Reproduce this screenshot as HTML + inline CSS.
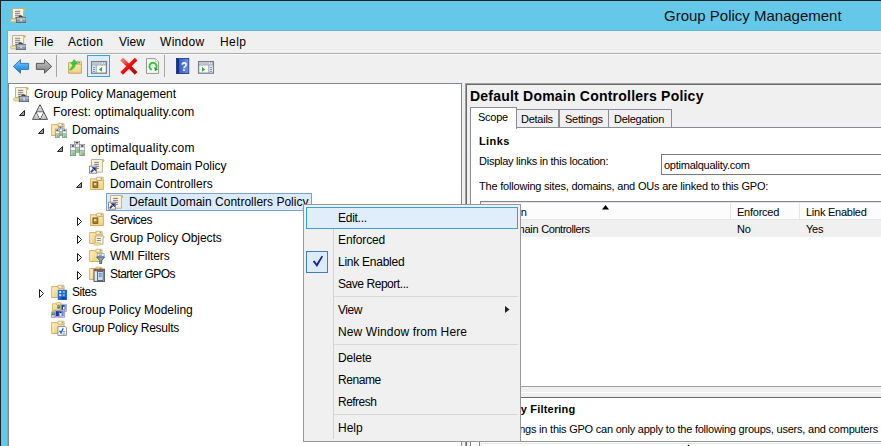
<!DOCTYPE html>
<html><head><meta charset="utf-8">
<style>
*{margin:0;padding:0;box-sizing:border-box}
html,body{width:881px;height:446px;overflow:hidden;background:#66c8e9}
body{position:relative;font-family:"Liberation Sans",sans-serif;color:#000}
.a{position:absolute}
.t{position:absolute;white-space:pre;font-size:12px;line-height:14px}
.s{position:absolute;white-space:pre;font-size:11px;line-height:13px;letter-spacing:-0.25px}
svg.i{position:absolute;width:16px;height:16px;overflow:visible}
</style></head><body>
<svg width="0" height="0" style="position:absolute">
<defs>
<linearGradient id="gBlue" x1="0" y1="0" x2="0" y2="1"><stop offset="0" stop-color="#7fd0fb"/><stop offset="1" stop-color="#0a78d8"/></linearGradient>
<linearGradient id="gGray" x1="0" y1="0" x2="0" y2="1"><stop offset="0" stop-color="#c8c8c8"/><stop offset="1" stop-color="#7c7c7c"/></linearGradient>
<linearGradient id="gFold" x1="0" y1="0" x2="0" y2="1"><stop offset="0" stop-color="#fbe9b0"/><stop offset="1" stop-color="#f0d283"/></linearGradient>
<linearGradient id="gTri" x1="0" y1="0" x2="0" y2="1"><stop offset="0" stop-color="#f2f2f2"/><stop offset="1" stop-color="#bdbdbd"/></linearGradient>
<linearGradient id="gBook" x1="0" y1="0" x2="1" y2="0"><stop offset="0" stop-color="#1d3a9a"/><stop offset="1" stop-color="#5a86e0"/></linearGradient>

<symbol id="gpm" viewBox="0 0 16 16">
 <path d="M2.5 1.5 H13.8 Q15.6 1.6 14.9 3.2 L13.6 4.2 V11.5 H2.5Z" fill="#fbf4d4" stroke="#b9b39e" stroke-width="1"/>
 <circle cx="14.2" cy="2.4" r="1.3" fill="#d6b65c"/>
 <rect x="5" y="3.8" width="5.2" height="1" fill="#7c7aa6"/>
 <rect x="5" y="5.8" width="5.2" height="1" fill="#7c7aa6"/>
 <rect x="5" y="7.8" width="5.2" height="1" fill="#7c7aa6"/>
 <rect x="5" y="9.8" width="3" height="1" fill="#7c7aa6"/>
 <rect x="0.5" y="11.9" width="7" height="3" rx="1.5" fill="#f3e2a0" stroke="#c9b06a" stroke-width="0.8"/>
 <path d="M8.4 10.6 Q10.6 7.4 12.8 10.6" fill="none" stroke="#2e2e2e" stroke-width="1.3"/>
 <rect x="6.3" y="10.3" width="9.7" height="5.3" fill="#8d9ba8" stroke="#56626e" stroke-width="0.8"/>
 <rect x="6.8" y="10.8" width="8.8" height="2" fill="#aebcc7"/>
 <rect x="10.5" y="12.2" width="1.2" height="2" fill="#f4f4f4"/>
</symbol>

<symbol id="forest" viewBox="0 0 16 16">
 <path d="M8 0.6 L11.8 8 H4.2Z" fill="url(#gTri)" stroke="#555" stroke-width="1" stroke-linejoin="round"/>
 <path d="M4.2 8 L8 15.4 H0.5Z" fill="url(#gTri)" stroke="#555" stroke-width="1" stroke-linejoin="round"/>
 <path d="M11.8 8 L15.5 15.4 H8Z" fill="url(#gTri)" stroke="#555" stroke-width="1" stroke-linejoin="round"/>
 <path d="M4.9 8.6 H11.1 L8 14.6Z" fill="#fff"/>
</symbol>

<symbol id="server" viewBox="0 0 6 12">
 <rect x="0.4" y="0.4" width="5.2" height="11.2" fill="#bfc6cd" stroke="#808890" stroke-width="0.8"/>
 <rect x="0.8" y="0.8" width="4.4" height="2.4" fill="#e9edf0"/>
 <ellipse cx="3" cy="2" rx="1.6" ry="0.75" fill="#1d2a30"/>
 <rect x="0.8" y="4" width="4.4" height="1.9" fill="#f8fafb"/>
 <rect x="0.8" y="6.4" width="4.4" height="0.7" fill="#98a1a8"/>
 <rect x="2.5" y="8.7" width="2.3" height="2.1" fill="#4ee02a"/>
</symbol>

<symbol id="domain" viewBox="0 0 16 16">
 <use href="#server" x="4" y="0.8" width="6" height="12"/>
 <use href="#server" x="0" y="4" width="6" height="12"/>
 <use href="#server" x="9.2" y="4" width="6" height="12"/>
</symbol>

<symbol id="folderA" viewBox="0 0 16 16">
 <path d="M0.7 2.6 H6.2 L7.4 3.6 H13 V13.5 H0.7Z" fill="url(#gFold)" stroke="#cfa85a" stroke-width="0.9"/>
 <rect x="6.7" y="1.2" width="6.4" height="3.2" rx="1" fill="#f7df9c" stroke="#cfa85a" stroke-width="0.8"/>
 <rect x="8.2" y="2.1" width="3.6" height="1.1" fill="#fff"/>
 <rect x="10.6" y="2.1" width="1.3" height="1.1" fill="#3d8ee0"/>
 <rect x="1.4" y="3.5" width="1.3" height="9.5" fill="#fff3c8" opacity="0.7"/>
</symbol>

<symbol id="domains" viewBox="0 0 16 16">
 <use href="#folderA" x="0" y="0" width="16" height="16"/>
 <use href="#server" x="7" y="4.2" width="5" height="10"/>
 <use href="#server" x="3.9" y="6.6" width="5" height="9.4"/>
 <use href="#server" x="11" y="6.6" width="5" height="9.4"/>
</symbol>

<symbol id="scroll" viewBox="0 0 16 16">
 <path d="M2.5 1.5 H13.6 Q15.2 1.7 14.6 3.2 L13.4 4 V14.2 H2.5Z" fill="#fbf4d4" stroke="#b9b39e" stroke-width="1"/>
 <circle cx="14" cy="2.5" r="1.2" fill="#d6b65c"/>
 <rect x="5.2" y="3.9" width="4.7" height="1" fill="#7c7aa6"/>
 <rect x="5.2" y="5.9" width="4.7" height="1" fill="#7c7aa6"/>
 <rect x="5.2" y="7.9" width="4.7" height="1" fill="#7c7aa6"/>
 <rect x="5.2" y="9.9" width="4.7" height="1" fill="#7c7aa6"/>
</symbol>

<symbol id="gpolink" viewBox="0 0 16 16">
 <use href="#scroll" x="0" y="0" width="16" height="16"/>
 <rect x="0.5" y="8.2" width="7" height="7" fill="#fff" stroke="#8e8e8e" stroke-width="1"/>
 <path d="M1.9 14.1 L4.4 11.6" stroke="#26268f" stroke-width="1.7"/><path d="M2.4 9.2 H6.8 V13.6Z" fill="#26268f"/>
</symbol>

<symbol id="ou" viewBox="0 0 16 16">
 <path d="M1.4 2.8 H6.6 L7.8 4.3 H14.4 V13.5 H1.4Z" fill="url(#gFold)" stroke="#cfa85a" stroke-width="0.9"/>
 <rect x="7.4" y="1.2" width="7" height="3.3" rx="1" fill="#f7df9c" stroke="#cfa85a" stroke-width="0.8"/>
 <rect x="8.9" y="2.1" width="3.8" height="1.1" fill="#fff"/>
 <rect x="11.6" y="2.1" width="1.3" height="1.1" fill="#3d8ee0"/>
 <rect x="3.9" y="5.9" width="5" height="5.7" fill="#a0801e" stroke="#6e5208" stroke-width="0.7"/>
 <rect x="5" y="7" width="2.4" height="2.2" fill="#e9d795"/>
</symbol>

<symbol id="gpofolder" viewBox="0 0 16 16">
 <use href="#folderA" x="0" y="0" width="16" height="16"/>
 <path d="M6.2 6 H14.2 Q15.6 6.3 15 7.4 L14 8 V14.2 H6.2Z" fill="#fbf4d4" stroke="#a9a38e" stroke-width="0.9"/>
 <rect x="7.8" y="8" width="4" height="0.9" fill="#7c7aa6"/>
 <rect x="7.8" y="10" width="4" height="0.9" fill="#7c7aa6"/>
 <rect x="4.8" y="12.8" width="7" height="2.3" rx="1.1" fill="#f3e2a0" stroke="#c9b06a" stroke-width="0.7"/>
</symbol>

<symbol id="wmi" viewBox="0 0 16 16">
 <use href="#folderA" x="0" y="0" width="16" height="16"/>
 <rect x="8.3" y="5.5" width="6.8" height="3.2" fill="#f4f6f8" stroke="#9aa4ae" stroke-width="0.8"/>
 <rect x="9.8" y="6.7" width="3.2" height="0.9" fill="#5a6a8a"/>
 <path d="M7.6 9 H15.6 L12.6 12.5 V16 H10.8 V12.5Z" fill="#8ea6c2" stroke="#44586e" stroke-width="0.9"/>
</symbol>

<symbol id="starter" viewBox="0 0 16 16">
 <use href="#folderA" x="0" y="0" width="16" height="16"/>
 <rect x="5" y="3.2" width="10.6" height="12.2" fill="#dfe6ee" stroke="#4e5660" stroke-width="1"/>
 <rect x="5" y="3" width="10.6" height="2.2" fill="#8a5c46"/>
 <rect x="8.4" y="5.6" width="5.8" height="8.8" fill="#c9dcf2" stroke="#3f4f66" stroke-width="0.8"/>
 <rect x="9.8" y="7.4" width="3" height="0.9" fill="#2a5aa0"/>
 <rect x="9.8" y="9.6" width="3" height="0.9" fill="#2a5aa0"/>
</symbol>

<symbol id="sites" viewBox="0 0 16 16">
 <use href="#folderA" x="0" y="0" width="16" height="16"/>
 <rect x="6.8" y="5.8" width="9.2" height="10.2" fill="#1a6ad8"/>
 <rect x="8.2" y="7" width="2" height="2" fill="#d8ecff"/>
 <rect x="11.8" y="7" width="2" height="2" fill="#7fb8f0"/>
 <rect x="8.2" y="10.2" width="2" height="2" fill="#d8ecff"/>
 <rect x="11.8" y="10.2" width="2" height="2" fill="#7fb8f0"/>
 <rect x="10.6" y="13.2" width="4" height="2" fill="#0a3aa0"/>
</symbol>

<symbol id="modeling" viewBox="0 0 16 16">
 <linearGradient id="gScr" x1="0" y1="0" x2="1" y2="0"><stop offset="0" stop-color="#0818a8"/><stop offset="1" stop-color="#78a6ea"/></linearGradient>
 <path d="M1.4 1.8 H5.2 L6.2 2.8 H10.1 V8.5 H1.4Z" fill="url(#gFold)" stroke="#cfa85a" stroke-width="0.8"/>
 <rect x="5.4" y="0.5" width="4.6" height="2.4" rx="0.9" fill="#f7df9c" stroke="#cfa85a" stroke-width="0.7"/>
 <rect x="9.8" y="2.2" width="5.8" height="7.2" fill="#e6eaef" stroke="#8a9098" stroke-width="0.7"/>
 <rect x="10.5" y="3" width="4.4" height="4.8" fill="url(#gScr)"/>
 <rect x="12" y="4.4" width="1.4" height="3" fill="#fff"/>
 <circle cx="12.7" cy="4.2" r="0.6" fill="#222"/>
 <rect x="6.5" y="3.5" width="2.1" height="3" fill="#2a3a2a"/>
 <rect x="6.8" y="3.9" width="1.5" height="1.6" fill="#3ae03a"/>
 <rect x="4.3" y="8.3" width="9.4" height="6.8" fill="#e6eaef" stroke="#8a9098" stroke-width="0.8"/>
 <rect x="5.1" y="9.1" width="7.8" height="5.2" fill="url(#gScr)"/>
 <rect x="8.5" y="10.6" width="2" height="3.4" fill="#fff"/>
 <circle cx="9.7" cy="10.4" r="0.75" fill="#1a1a1a"/>
 <rect x="7" y="15.1" width="4.4" height="0.9" fill="#aab0b8"/>
 <rect x="0.4" y="9.6" width="3.6" height="6.2" rx="0.8" fill="#c8ccd2" stroke="#80868e" stroke-width="0.7"/>
 <rect x="0.9" y="10.7" width="2.6" height="2.2" fill="#303830"/>
 <rect x="1.2" y="11" width="2" height="1.5" fill="#3ae03a"/>
</symbol>

<symbol id="results" viewBox="0 0 16 16">
 <use href="#folderA" x="0" y="0" width="16" height="16"/>
 <path d="M6.9 6.6 H14.4 L15.6 7.8 V15.4 H6.9Z" fill="#fafcff" stroke="#80868c" stroke-width="0.9"/>
 <path d="M8.6 10.6 L10 13 L12.2 8.2" fill="none" stroke="#1a6ad0" stroke-width="1.4"/>
 <rect x="11.6" y="11.4" width="2.6" height="0.8" fill="#5a6a9a"/>
 <rect x="11.6" y="13.6" width="2.6" height="0.8" fill="#5a6a9a"/>
</symbol>
</defs>
</svg>

<!-- outer dark border -->
<div class="a" style="left:0;top:0;width:881px;height:1px;background:#232323"></div>
<div class="a" style="left:0;top:0;width:1px;height:446px;background:#232323"></div>
<!-- title -->
<div class="t" style="left:664px;top:7px;font-size:15px;line-height:17px;color:#111;letter-spacing:0px">Group Policy Management</div>

<!-- client area -->
<div class="a" style="left:7px;top:30px;width:874px;height:416px;background:#5bb8d8"></div>
<div class="a" style="left:8px;top:31px;width:873px;height:415px;background:#f0f0f0"></div>
<div class="a" style="left:8px;top:53px;width:873px;height:1px;background:#ababab"></div>
<div class="a" style="left:8px;top:54px;width:873px;height:1px;background:#fafcfe"></div>

<!-- menubar -->
<div class="t" style="left:34px;top:35px">File</div>
<div class="t" style="left:68px;top:35px;letter-spacing:0.33px">Action</div>
<div class="t" style="left:119px;top:35px">View</div>
<div class="t" style="left:160px;top:35px;letter-spacing:0.3px">Window</div>
<div class="t" style="left:220px;top:35px;letter-spacing:0.4px">Help</div>

<!-- toolbar separators -->
<div class="a" style="left:56px;top:55px;width:1px;height:22px;background:#a6a6a6"></div>
<div class="a" style="left:164px;top:55px;width:1px;height:22px;background:#a6a6a6"></div>
<!-- toggled button -->
<div class="a" style="left:87px;top:55px;width:23px;height:22px;border:1px solid #3c9fe0;background:#dcecfc"></div>


<svg class="a" style="left:0;top:0" width="881" height="90">
 <defs>
  <linearGradient id="gRed" x1="0" y1="0" x2="1" y2="1"><stop offset="0" stop-color="#ff6a6a"/><stop offset="0.45" stop-color="#f01010"/><stop offset="1" stop-color="#c00000"/></linearGradient>
  <linearGradient id="gBook2" x1="0" y1="0" x2="1" y2="0"><stop offset="0" stop-color="#2a4fb8"/><stop offset="1" stop-color="#6d93e6"/></linearGradient>
 </defs>
 <use href="#gpm" x="10" y="7" width="16" height="16"/>
 <use href="#gpm" x="10" y="34" width="16" height="16"/>
 <path d="M13.3 66.5 L20.5 59.6 V63.4 H28.6 V69.4 H20.5 V73.2Z" fill="url(#gBlue)" stroke="#2a76c0" stroke-width="0.9" stroke-linejoin="round"/>
 <path d="M51.7 66.5 L44.5 59.6 V63.4 H36.4 V69.4 H44.5 V73.2Z" fill="url(#gGray)" stroke="#4e4e4e" stroke-width="0.9" stroke-linejoin="round"/>
 <path d="M68.6 62.6 H73.5 L74.5 63.8 H81.4 V73.2 H68.6Z" fill="url(#gFold)" stroke="#c49c52" stroke-width="0.9"/>
 <rect x="75.8" y="61.4" width="5.8" height="2.6" rx="0.8" fill="#f7df9c" stroke="#c49c52" stroke-width="0.7"/>
 <rect x="77.6" y="62.1" width="2.4" height="1" fill="#3d8ee0"/>
 <path d="M72.6 63.4 C72.8 66.4 71.4 68 69.6 69.4 L70.8 70.2 C73.6 68.6 75.4 66.6 75.4 63.4 Z" fill="#3ed23e" stroke="#22a022" stroke-width="0.5"/>
 <path d="M70.9 64 L74.2 59.6 L77.5 63.6 Z" fill="#3ed23e" stroke="#22a022" stroke-width="0.5" stroke-linejoin="round"/>

 <rect x="91.6" y="61.6" width="14.8" height="11.6" fill="#fff" stroke="#77808c" stroke-width="1.3"/>
 <rect x="92.5" y="62.6" width="9.5" height="1" fill="#9aa1ab"/>
 <rect x="102.8" y="62.4" width="1.3" height="1.3" fill="#9aa1ab"/>
 <rect x="104.6" y="62.4" width="1.3" height="1.3" fill="#9aa1ab"/>
 <rect x="92" y="64.4" width="14" height="1" fill="#8a919c"/>
 <rect x="95.6" y="65.2" width="1" height="7.7" fill="#8a919c"/>
 <rect x="93.1" y="66.8" width="1.8" height="1" fill="#3a78c8"/>
 <rect x="93.1" y="68.8" width="1.8" height="1" fill="#3a78c8"/>
 <rect x="93.1" y="70.8" width="1.8" height="1" fill="#3a78c8"/>
 <path d="M98.8 69.4 L102 67 V71.8Z" fill="#2ab82a"/>
 <path d="M123 60.4 L134.8 72 M134.8 60.4 L123 72" stroke="url(#gRed)" stroke-width="3.8" stroke-linecap="square"/>
 <path d="M146.5 58.7 H155.6 L158.6 61.7 V73.4 H146.5Z" fill="#fbfbfb" stroke="#8a8a8a" stroke-width="0.9"/>
 <path d="M155.6 58.7 V61.7 H158.6" fill="#fff" stroke="#b0b0b0" stroke-width="0.6"/>
 <path d="M151.8 69.8 A3.6 3.6 0 1 1 156.1 68.2" fill="none" stroke="#34c834" stroke-width="2"/>
 <path d="M154.2 67.1 L158.2 69.3 L155 71.2Z" fill="#12a812"/>
 <rect x="176.4" y="58.4" width="12.4" height="15.2" fill="url(#gBook2)" stroke="#1c3288" stroke-width="0.8"/>
 <rect x="176.6" y="58.6" width="2.4" height="14.8" fill="#18307e"/>
 <text x="184" y="70.8" font-family="Liberation Sans" font-weight="bold" font-size="12" fill="#fff" text-anchor="middle" transform="translate(184 0) scale(0.85 1) translate(-184 0)">?</text>

 <rect x="198.6" y="61.6" width="14.8" height="11.6" fill="#fff" stroke="#77808c" stroke-width="1.3"/>
 <rect x="199.5" y="62.6" width="9.5" height="1" fill="#9aa1ab"/>
 <rect x="209.8" y="62.4" width="1.3" height="1.3" fill="#9aa1ab"/>
 <rect x="211.6" y="62.4" width="1.3" height="1.3" fill="#9aa1ab"/>
 <rect x="199" y="64.4" width="14" height="1" fill="#8a919c"/>
 <rect x="208.4" y="65.2" width="1" height="7.7" fill="#8a919c"/>
 <rect x="210.1" y="66.8" width="1.8" height="1" fill="#3a78c8"/>
 <rect x="210.1" y="68.8" width="1.8" height="1" fill="#3a78c8"/>
 <rect x="210.1" y="70.8" width="1.8" height="1" fill="#3a78c8"/>
 <path d="M202 67 L205.2 69.4 L202 71.8Z" fill="#2ab82a"/>
</svg>

<!-- tree pane -->
<div class="a" style="left:8px;top:83px;width:454px;height:363px;border:1px solid #828790;border-bottom:none;background:#fff"></div>
<!-- selection -->
<div class="a" style="left:106px;top:193px;width:206px;height:18px;border:1px solid #7da2ce;background:#dcebfc"></div>

<div class="t" style="left:34px;top:87px">Group Policy Management</div>
<div class="t" style="left:53px;top:105px;letter-spacing:0.08px">Forest: optimalquality.com</div>
<div class="t" style="left:72px;top:123px">Domains</div>
<div class="t" style="left:91px;top:141px;letter-spacing:0.3px">optimalquality.com</div>
<div class="t" style="left:110px;top:159px;letter-spacing:-0.08px">Default Domain Policy</div>
<div class="t" style="left:110px;top:177px">Domain Controllers</div>
<div class="t" style="left:129px;top:195px">Default Domain Controllers Policy</div>
<div class="t" style="left:110px;top:213px;letter-spacing:-0.5px">Services</div>
<div class="t" style="left:110px;top:231px;letter-spacing:-0.05px">Group Policy Objects</div>
<div class="t" style="left:110px;top:249px;letter-spacing:-0.1px">WMI Filters</div>
<div class="t" style="left:110px;top:267px;letter-spacing:-0.6px">Starter GPOs</div>
<div class="t" style="left:72px;top:285px;letter-spacing:-0.5px">Sites</div>
<div class="t" style="left:72px;top:303px">Group Policy Modeling</div>
<div class="t" style="left:72px;top:321px;letter-spacing:-0.25px">Group Policy Results</div>

<svg class="i" style="left:13px;top:86px" viewBox="0 0 16 16"><use href="#gpm"/></svg>
<svg class="i" style="left:32px;top:104px" viewBox="0 0 16 16"><use href="#forest"/></svg>
<svg class="i" style="left:51px;top:122px" viewBox="0 0 16 16"><use href="#domains"/></svg>
<svg class="i" style="left:70px;top:140px" viewBox="0 0 16 16"><use href="#domain"/></svg>
<svg class="i" style="left:89px;top:158px" viewBox="0 0 16 16"><use href="#gpolink"/></svg>
<svg class="i" style="left:89px;top:176px" viewBox="0 0 16 16"><use href="#ou"/></svg>
<svg class="i" style="left:108px;top:194px" viewBox="0 0 16 16"><use href="#gpolink"/></svg>
<svg class="i" style="left:89px;top:212px" viewBox="0 0 16 16"><use href="#ou"/></svg>
<svg class="i" style="left:89px;top:230px" viewBox="0 0 16 16"><use href="#gpofolder"/></svg>
<svg class="i" style="left:89px;top:248px" viewBox="0 0 16 16"><use href="#wmi"/></svg>
<svg class="i" style="left:89px;top:266px" viewBox="0 0 16 16"><use href="#starter"/></svg>
<svg class="i" style="left:51px;top:284px" viewBox="0 0 16 16"><use href="#sites"/></svg>
<svg class="i" style="left:51px;top:302px" viewBox="0 0 16 16"><use href="#modeling"/></svg>
<svg class="i" style="left:51px;top:320px" viewBox="0 0 16 16"><use href="#results"/></svg>
<svg class="a" style="left:19px;top:110px" width="7" height="7"><path d="M5.5 0.5 V5.5 H0.5Z" fill="#9a9a9a" stroke="#262626" stroke-width="1" stroke-linejoin="miter"/></svg>
<svg class="a" style="left:38px;top:128px" width="7" height="7"><path d="M5.5 0.5 V5.5 H0.5Z" fill="#9a9a9a" stroke="#262626" stroke-width="1" stroke-linejoin="miter"/></svg>
<svg class="a" style="left:57px;top:146px" width="7" height="7"><path d="M5.5 0.5 V5.5 H0.5Z" fill="#9a9a9a" stroke="#262626" stroke-width="1" stroke-linejoin="miter"/></svg>
<svg class="a" style="left:76px;top:182px" width="7" height="7"><path d="M5.5 0.5 V5.5 H0.5Z" fill="#9a9a9a" stroke="#262626" stroke-width="1" stroke-linejoin="miter"/></svg>
<svg class="a" style="left:77px;top:217px" width="7" height="10"><path d="M0.5 0.5 V8.5 L4.5 4.5 Z" fill="#fff" stroke="#1c1c1c" stroke-width="1" stroke-linejoin="miter"/></svg>
<svg class="a" style="left:77px;top:235px" width="7" height="10"><path d="M0.5 0.5 V8.5 L4.5 4.5 Z" fill="#fff" stroke="#1c1c1c" stroke-width="1" stroke-linejoin="miter"/></svg>
<svg class="a" style="left:77px;top:253px" width="7" height="10"><path d="M0.5 0.5 V8.5 L4.5 4.5 Z" fill="#fff" stroke="#1c1c1c" stroke-width="1" stroke-linejoin="miter"/></svg>
<svg class="a" style="left:77px;top:271px" width="7" height="10"><path d="M0.5 0.5 V8.5 L4.5 4.5 Z" fill="#fff" stroke="#1c1c1c" stroke-width="1" stroke-linejoin="miter"/></svg>
<svg class="a" style="left:39px;top:289px" width="7" height="10"><path d="M0.5 0.5 V8.5 L4.5 4.5 Z" fill="#fff" stroke="#1c1c1c" stroke-width="1" stroke-linejoin="miter"/></svg>
<!-- right pane -->
<div class="a" style="left:465px;top:83px;width:416px;height:363px;background:#f0f0f0;border-left:1px solid #a0a0a0;border-top:1px solid #a0a0a0"></div>
<div class="a" style="left:466px;top:84px;width:415px;height:362px;border-left:1px solid #696969;border-top:1px solid #696969"></div>
<div class="t" style="left:470px;top:89px;font-size:14px;line-height:14px;font-weight:bold;letter-spacing:0.22px">Default Domain Controllers Policy</div>

<!-- tab page -->
<div class="a" style="left:470px;top:127px;width:411px;height:260px;background:#fff;border-left:1px solid #898c95;border-top:1px solid #898c95"></div>
<!-- tabs -->
<div class="a" style="left:516px;top:109px;width:43px;height:18px;background:#f0f0f0;border:1px solid #898c95;border-bottom:none"></div>
<div class="a" style="left:559px;top:109px;width:50px;height:18px;background:#f0f0f0;border:1px solid #898c95;border-bottom:none"></div>
<div class="a" style="left:608px;top:109px;width:64px;height:18px;background:#f0f0f0;border:1px solid #898c95;border-bottom:none"></div>
<div class="a" style="left:470px;top:107px;width:47px;height:22px;background:#fff;border:1px solid #898c95;border-bottom:none"></div>
<div class="s" style="left:478px;top:111px">Scope</div>
<div class="s" style="left:521px;top:113px">Details</div>
<div class="s" style="left:565px;top:113px">Settings</div>
<div class="s" style="left:614px;top:113px">Delegation</div>

<div class="s" style="left:479px;top:135px;font-weight:bold;letter-spacing:0.4px">Links</div>
<div class="s" style="left:479px;top:155px">Display links in this location:</div>
<div class="a" style="left:661px;top:154px;width:230px;height:21px;border:1px solid #7a7a7a;background:#fff"></div>
<div class="s" style="left:664px;top:159px">optimalquality.com</div>
<div class="s" style="left:479px;top:180px;letter-spacing:-0.2px">The following sites, domains, and OUs are linked to this GPO:</div>

<!-- list view -->
<div class="a" style="left:480px;top:201px;width:401px;height:186px;border-left:1px solid #828790;border-top:1px solid #828790;background:#fff"></div>
<div class="a" style="left:481px;top:202px;width:400px;height:17px;background:#fcfcfc"></div>
<div class="a" style="left:481px;top:202px;width:400px;height:1px;background:#e3e3e3"></div>
<div class="a" style="left:481px;top:219px;width:400px;height:1px;background:#e5e5e5"></div>
<div class="a" style="left:481px;top:220px;width:400px;height:17px;background:#f0f0f0"></div>
<div class="a" style="left:730px;top:202px;width:1px;height:17px;background:#e5e5e5"></div>
<div class="a" style="left:799px;top:202px;width:1px;height:17px;background:#e5e5e5"></div>
<svg class="a" style="left:602px;top:205px" width="8" height="5"><path d="M0 4.5 L3.5 0 L7 4.5Z" fill="#000"/></svg>
<div class="s" style="left:487px;top:206px">Location</div>
<div class="s" style="left:737px;top:206px">Enforced</div>
<div class="s" style="left:806px;top:206px">Link Enabled</div>
<div class="s" style="left:502px;top:223px">Domain <span style="letter-spacing:-0.45px">Controllers</span></div>
<div class="s" style="left:737px;top:223px">No</div>
<div class="s" style="left:806px;top:223px">Yes</div>

<!-- splitter -->
<div class="a" style="left:470px;top:386px;width:411px;height:1px;background:#a0a0a0"></div>
<div class="a" style="left:470px;top:387px;width:411px;height:10px;background:#f0f0f0"></div>
<div class="a" style="left:470px;top:392px;width:411px;height:1px;background:#fff"></div>
<div class="a" style="left:470px;top:397px;width:411px;height:1px;background:#696969"></div>
<div class="a" style="left:470px;top:398px;width:411px;height:48px;background:#fff;border-left:1px solid #898c95"></div>
<div class="s" style="left:482px;top:403px;font-weight:bold;letter-spacing:0.2px">Security Filtering</div>
<div class="s" style="left:479px;top:423px;letter-spacing:-0.22px">The settings in this GPO can only apply to the following groups, users, and computers</div>
<div class="a" style="left:470px;top:441px;width:411px;height:1px;background:#8e929a"></div>
<div class="a" style="left:470px;top:442px;width:411px;height:4px;background:#fff;border-left:1px solid #898c95"></div>
<div class="a" style="left:479px;top:442px;width:402px;height:4px;border-left:1px solid #828790"></div>
<div class="a" style="left:481px;top:443px;width:400px;height:3px;border-left:1px solid #e3e3e3;border-top:1px solid #e3e3e3"></div>
<svg class="a" style="left:684px;top:444px" width="9" height="2"><path d="M2.5 3 L4.5 0.6 L6.5 3Z" fill="#000"/></svg>

<!-- context menu -->
<div class="a" style="left:303px;top:204px;width:218px;height:238px;background:#f0f0f0;border:1px solid #979797"></div>
<div class="a" style="left:333px;top:207px;width:1px;height:232px;background:#d2d2d2"></div>
<div class="a" style="left:306px;top:207px;width:212px;height:22px;background:#e0eefc;border:1px solid #3a9fe2"></div>
<div class="a" style="left:306px;top:251px;width:22px;height:22px;background:#dcecfb;border:1px solid #3b80b8"></div>
<div class="a" style="left:334px;top:296px;width:184px;height:1px;background:#d7d7d7"></div>
<div class="a" style="left:334px;top:344px;width:184px;height:1px;background:#d7d7d7"></div>
<div class="a" style="left:334px;top:414px;width:184px;height:1px;background:#d7d7d7"></div>
<div class="t" style="left:338px;top:211px;letter-spacing:-0.27px">Edit...</div>
<div class="t" style="left:338px;top:233px;letter-spacing:-0.11px">Enforced</div>
<div class="t" style="left:338px;top:255px;letter-spacing:-0.25px">Link Enabled</div>
<div class="t" style="left:338px;top:277px;letter-spacing:-0.45px">Save Report...</div>
<div class="t" style="left:338px;top:303px;letter-spacing:-0.5px">View</div>
<div class="t" style="left:338px;top:325px;letter-spacing:0.12px">New Window from Here</div>
<div class="t" style="left:338px;top:351px;letter-spacing:-0.18px">Delete</div>
<div class="t" style="left:338px;top:373px;letter-spacing:-0.44px">Rename</div>
<div class="t" style="left:338px;top:395px;letter-spacing:-0.53px">Refresh</div>
<div class="t" style="left:338px;top:421px">Help</div>
<svg class="a" style="left:505px;top:306px" width="5" height="8"><path d="M0 0 L4.5 3.5 L0 7Z" fill="#222"/></svg>
<svg class="a" style="left:312px;top:255px" width="12" height="14"><path d="M0.8 6.6 L2.4 5.6 L4.7 8.6 L9.6 0.8 L11 1.6 L5 11.9 Z" fill="#1e1e96"/></svg>

</body></html>
